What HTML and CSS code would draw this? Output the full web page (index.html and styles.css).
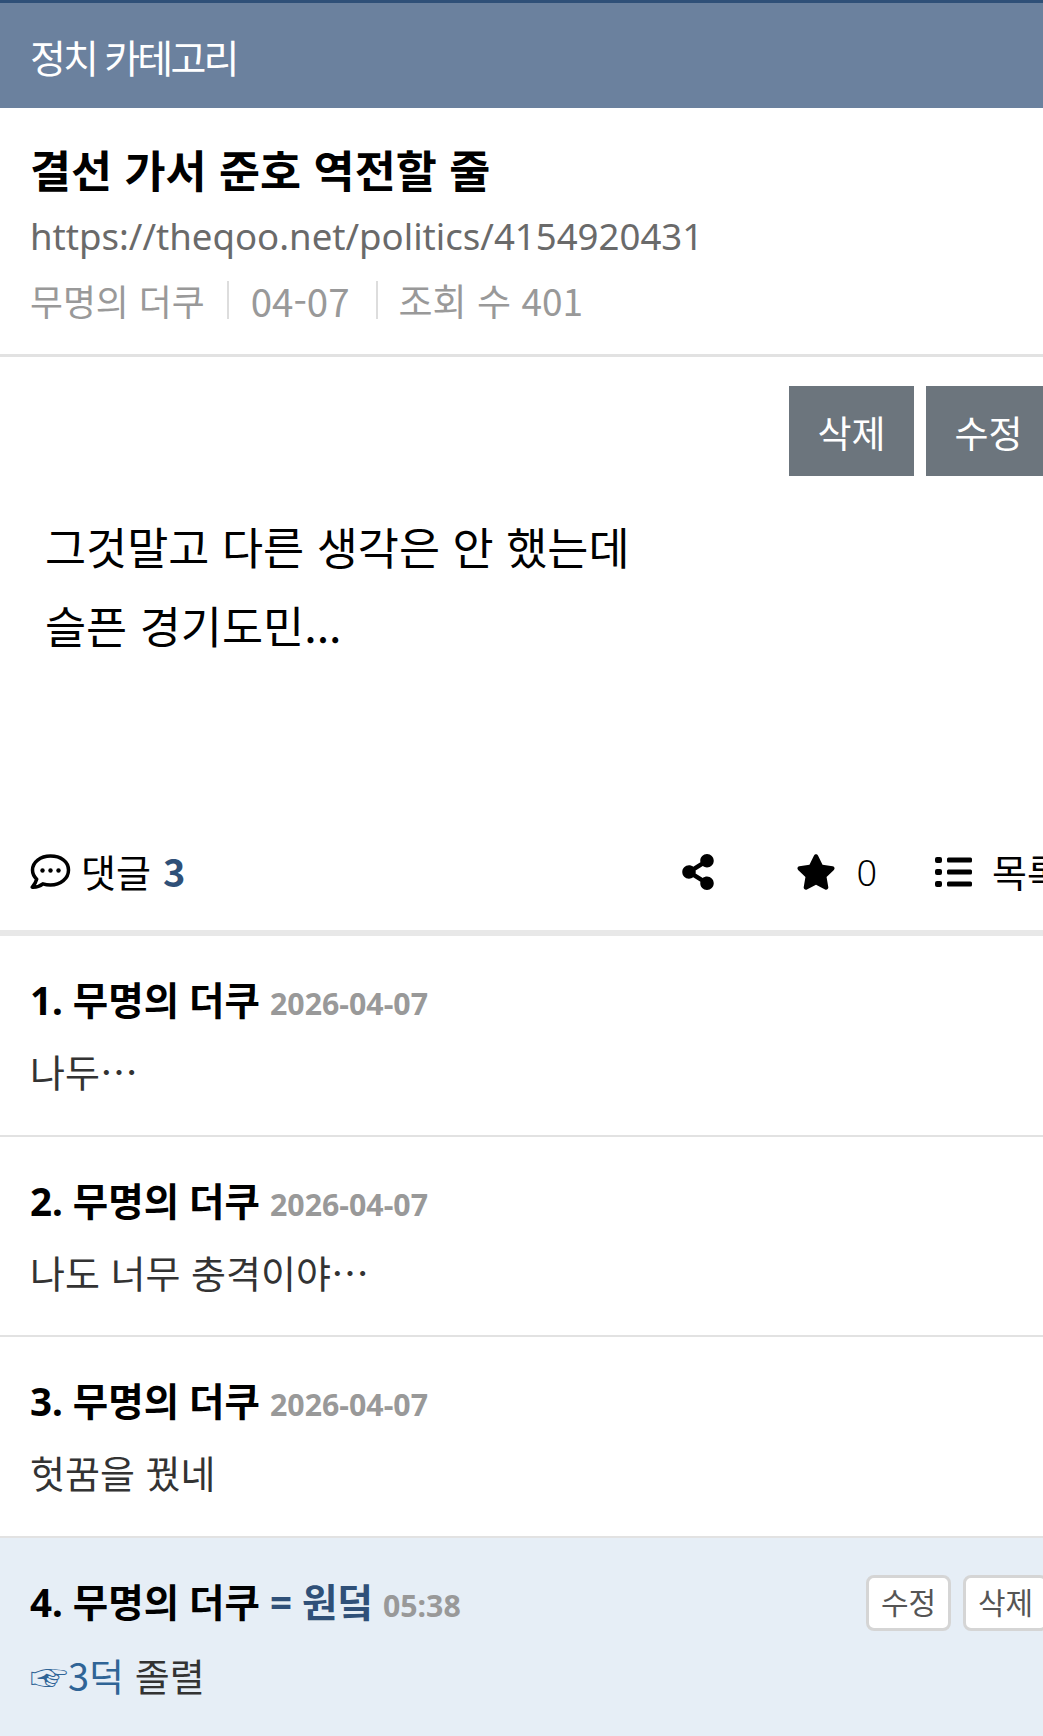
FILE: index.html
```html
<!DOCTYPE html>
<html lang="ko">
<head>
    <meta charset="UTF-8">
    <meta name="viewport" content="width=device-width, initial-scale=1.0">
    <title>결선 가서 준호 역전할 줄</title>
    <link rel="stylesheet" href="styles.css">
</head>
<body>
<div class="page">
    <div class="cate">정치 카테고리</div>

    <div class="head">
        <h1 class="title">결선 가서 준호 역전할 줄</h1>
        <div class="url">https://theqoo.net/politics/4154920431</div>
        <div class="meta">
            <span class="meta-name">무명의 더쿠</span>
            <span class="meta-date">04-07</span>
            <span class="meta-hit">조회 수 401</span>
        </div>
    </div>

    <div class="btns">
        <a class="btn">삭제</a>
        <a class="btn">수정</a>
    </div>

    <div class="content">
        <p>그것말고 다른 생각은 안 했는데</p>
        <p>슬픈 경기도민...</p>
    </div>

    <div class="tools">
        <div class="tool-left">
            <svg class="ico-comment" viewBox="0 0 40 36">
                <path d="M20 2C9.800 2 2 8.200 2 16c0 3.500 1.600 6.700 4.200 9.200C5.600 28 3.600 31 1.800 33.200c4 .2 8-1.300 10.600-3.400 2.400.8 5 1.200 7.600 1.200 10.200 0 18-6.500 18-15S30.200 2 20 2z" fill="none" stroke="#000" stroke-width="3.500" stroke-linejoin="round"/>
                <circle cx="12" cy="16.500" r="2.200"/>
                <circle cx="20" cy="16.500" r="2.200"/>
                <circle cx="28" cy="16.500" r="2.200"/>
            </svg>
            <span class="tool-text">댓글</span>
            <b class="count tool-text">3</b>
        </div>
        <div class="tool-right">
            <svg class="ico-share" viewBox="0 0 448 512"><path d="M352 320c-22.608 0-43.387 7.819-59.790 20.895l-102.486-64.054a96.551 96.551 0 0 0 0-41.683l102.486-64.054C308.613 184.181 329.392 192 352 192c53.019 0 96-42.981 96-96S405.019 0 352 0s-96 42.981-96 96c0 7.158.790 14.130 2.276 20.841L155.790 180.895C139.387 167.819 118.608 160 96 160c-53.019 0-96 42.981-96 96s42.981 96 96 96c22.608 0 43.387-7.819 59.790-20.895l102.486 64.054A96.301 96.301 0 0 0 256 416c0 53.019 42.981 96 96 96s96-42.981 96-96-42.981-96-96-96z"/></svg>
            <svg class="ico-star" viewBox="0 0 576 512"><path d="M259.300 17.800L194 150.200 47.900 171.500c-26.200 3.800-36.700 36.100-17.700 54.600l105.700 103-25 145.500c-4.500 26.300 23.200 46 46.400 33.700L288 439.600l130.700 68.700c23.200 12.200 50.900-7.400 46.400-33.700l-25-145.500 105.700-103c19-18.500 8.500-50.800-17.700-54.600L382 150.200 316.700 17.800c-11.700-23.600-45.600-23.900-57.400 0z"/></svg>
            <span class="star-num">0</span>
            <svg class="ico-list" viewBox="0 0 37 30">
                <rect x="0" y="0" width="7" height="6" rx="2"/>
                <rect x="0" y="12" width="7" height="6" rx="2"/>
                <rect x="0" y="24" width="7" height="6" rx="2"/>
                <rect x="12" y="0.500" width="25" height="5" rx="1.500"/>
                <rect x="12" y="12.500" width="25" height="5" rx="1.500"/>
                <rect x="12" y="24.500" width="25" height="5" rx="1.500"/>
            </svg>
            <span class="tool-text">목록</span>
        </div>
    </div>

    <div class="comments">
        <div class="cmt">
            <div class="cmt-head"><b>1. 무명의 더쿠</b> <span class="date">2026-04-07</span></div>
            <div class="cmt-body">나두⋯</div>
        </div>
        <div class="cmt">
            <div class="cmt-head"><b>2. 무명의 더쿠</b> <span class="date">2026-04-07</span></div>
            <div class="cmt-body">나도 너무 충격이야⋯</div>
        </div>
        <div class="cmt">
            <div class="cmt-head"><b>3. 무명의 더쿠</b> <span class="date">2026-04-07</span></div>
            <div class="cmt-body">헛꿈을 꿨네</div>
        </div>
        <div class="cmt mine">
            <div class="cmt-head">
                <b>4. 무명의 더쿠</b> <b class="op">= 원덬</b> <span class="date">05:38</span>
                <div class="cmt-btns">
                    <a class="sbtn">수정</a>
                    <a class="sbtn">삭제</a>
                </div>
            </div>
            <div class="cmt-body"><a class="link">☞3덕</a> 졸렬</div>
        </div>
    </div>
</div>
</body>
</html>
```

FILE: styles.css
```css
html, body {
    margin: 0;
    padding: 0;
    overflow: hidden;
    background: #fff;
}
body {
    font-family: "Noto Sans CJK KR", "Noto Sans", sans-serif;
    color: #000;
}
.page {
    width: 1062px;
}
.cate {
    height: 105px;
    line-height: 107px;
    padding-left: 30px;
    background: #6b819e;
    border-top: 3px solid #2f5078;
    color: #fff;
    font-size: 39px;
    letter-spacing: -2.8px;
}
.head {
    padding: 30px 30px 0;
    box-sizing: border-box;
    height: 249px;
    border-bottom: 3px solid #e2e2e2;
}
.title {
    margin: 0 0 3px;
    font-size: 44.6px;
    line-height: 62px;
    font-weight: 700;
}
.url {
    font-size: 36.6px;
    line-height: 66px;
    color: #6a6a6a;
    font-family: "Noto Sans", sans-serif;
}
.meta {
    display: flex;
    margin-top: -1px;
    font-size: 37px;
    line-height: 64px;
    color: #999;
}
.meta-name {
    font-size: 35.8px;
}
.meta-date {
    margin-left: 22px;
    padding-left: 24px;
    font-size: 38.500px;
    background: linear-gradient(#ddd, #ddd) left center / 2px 38px no-repeat;
}
.meta-hit {
    margin-left: 26px;
    padding-left: 23px;
    background: linear-gradient(#ddd, #ddd) left center / 2px 38px no-repeat;
}
.btns {
    display: flex;
    justify-content: flex-end;
    gap: 12px;
    padding: 29px 11px 0 0;
}
.btn {
    width: 125px;
    height: 90px;
    line-height: 92px;
    text-align: center;
    background: #6c757d;
    color: #fff;
    font-size: 37px;
}
.content {
    padding: 30px 45px 0;
    height: 365px;
    box-sizing: border-box;
    font-size: 44.7px;
}
.content p {
    margin: 0;
    line-height: 79px;
}
.tools {
    display: flex;
    justify-content: space-between;
    align-items: center;
    height: 62px;
    padding: 0 0 27px 30px;
    border-bottom: 6px solid #e8e8e8;
    font-size: 38px;
}
.tool-left, .tool-right {
    display: flex;
    align-items: center;
}
.tool-text {
    margin-bottom: 4px;
}
.ico-comment {
    width: 41px;
    height: 36px;
    margin-right: 10px;
}
.count {
    margin-left: 12px;
    color: #2f5078;
}
.ico-share {
    width: 32px;
    height: 36px;
    margin-right: 82px;
}
.ico-star {
    width: 40px;
    height: 36px;
}
.star-num {
    margin: 0 58px 0 21px;
    font-family: "Noto Sans", sans-serif;
    font-size: 36px;
    font-weight: 300;
}
.ico-list {
    width: 37px;
    height: 30px;
    margin-right: 20px;
}
.cmt {
    height: 200.500px;
    padding: 30px 30px 0;
    box-sizing: border-box;
    border-bottom: 2px solid #e2e2e2;
}
.cmt-head {
    position: relative;
    font-family: "Noto Sans", "Noto Sans CJK KR", sans-serif;
    font-size: 38.5px;
    line-height: 68px;
}
.cmt-head .date {
    font-size: 30.3px;
    font-weight: 700;
    color: #999;
}
.op {
    color: #2f5078;
}
.cmt-body {
    margin-top: -2px;
    font-size: 38px;
    line-height: 70px;
    color: #333;
}
.link {
    color: #2f6496;
}
.mine {
    height: 210px;
    background: #e6eef6;
    border-bottom: 0;
}
.mine .cmt-body {
    margin-top: 0;
}
.cmt-btns {
    position: absolute;
    top: 7px;
    right: -16px;
    display: flex;
    gap: 12px;
}
.sbtn {
    width: 85px;
    height: 56px;
    line-height: 50px;
    text-align: center;
    box-sizing: border-box;
    background: #fff;
    border: 3px solid #d5d5d5;
    border-radius: 8px;
    color: #555;
    font-size: 30px;
}
```
